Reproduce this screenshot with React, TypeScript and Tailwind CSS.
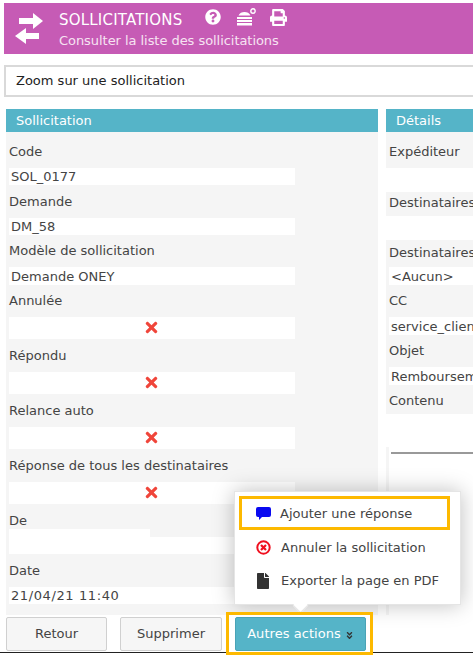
import React from "react";
import { FaQuestionCircle, FaPrint, FaTimes, FaFile, FaAngleDoubleDown } from "react-icons/fa";

const font = { fontFamily: '"DejaVu Sans", sans-serif' };

function Label({ children, cls }: { children?: React.ReactNode; cls: string }) {
  return <div className={`${cls} text-[13px] leading-[17px] text-[#444] whitespace-nowrap`}>{children}</div>;
}

function Box({ children, cls }: { children?: React.ReactNode; cls: string }) {
  return (
    <div className={`${cls} bg-white pl-[2px] text-[13px] leading-[17px] text-[#444] flex items-center whitespace-nowrap overflow-hidden`}>
      {children}
    </div>
  );
}

function RedX() {
  return (
    <div className="w-full flex justify-center pr-[4px] pb-[2px]">
      <FaTimes className="text-[#f0453a] text-[17px]" />
    </div>
  );
}

function SectionHead({ title }: { title: string }) {
  return <div className="h-[23px] shrink-0 bg-[#55b4c8] pl-[10px] text-[13px] leading-[23px] text-white">{title}</div>;
}

const L33 = "h-[33px] pt-[8px]";
const L32 = "h-[32px] pt-[7px]";

export default function App() {
  return (
    <div className="w-[473px] h-[655px] overflow-hidden bg-white flex flex-col" style={font}>
      {/* Title banner */}
      <div className="mt-[3px] ml-[4px] h-[51px] shrink-0 bg-[#c65bb5] flex text-white">
        <svg width="28" height="31" viewBox="0 0 28 31" className="ml-[11px] mt-[10px] shrink-0" fill="white">
          <path d="M4 5h14V0l10 8-10 8v-5H4z" />
          <path d="M24 20H11v-5L0 23l11 8v-5h13z" />
        </svg>
        <div className="ml-[16px] pt-[8px]">
          <div className="flex items-center h-[18px]">
            <span className="text-[15px] leading-[18px] tracking-[0.2px] w-[146px] whitespace-nowrap">SOLLICITATIONS</span>
            <FaQuestionCircle className="text-[16px] -mt-[6px]" />
            <svg width="19" height="18" viewBox="0 0 19 18" className="ml-[16px] -mt-[6px]" fill="white">
              <path d="M1.500 7.500C2.500 5 5 4 7.500 4S12.500 5 13.500 7.500zM0 9h15v2H0zM0 12h15v2H0zM0 15h15v2.500H0z" />
              <circle cx="16" cy="3" r="2.200" fill="none" stroke="white" strokeWidth="1.400" />
            </svg>
            <FaPrint className="text-[17px] ml-[14px] -mt-[6px]" />
          </div>
          <div className="text-[13px] leading-[18px] mt-[3px] text-[#f6e3f2] tracking-[-0.05px] whitespace-nowrap">Consulter la liste des sollicitations</div>
        </div>
      </div>

      {/* Zoom title */}
      <div className="mt-[11px] ml-[4px] h-[32px] shrink-0 border-2 border-r-0 border-[#d9d9d9] pl-[10px] text-[13px] leading-[28px] text-[#222]">
        Zoom sur une sollicitation
      </div>

      {/* Two panels */}
      <div className="mt-[12px] flex pl-[6px] h-[506px] shrink-0 gap-[8px] overflow-hidden">
        <div className="w-[372px] shrink-0 flex flex-col bg-[#f5f5f5] overflow-hidden">
          <SectionHead title="Sollicitation" />
          <div className="w-[286px] ml-[3px] pt-[3px] flex flex-col">
            <Label cls={L33}>Code</Label>
            <Box cls="h-[17px] shrink-0">SOL_0177</Box>
            <Label cls={L33}>Demande</Label>
            <Box cls="h-[17px] shrink-0">DM_58</Box>
            <Label cls={L32}>Modèle de sollicitation</Label>
            <Box cls="h-[18px] shrink-0">Demande ONEY</Box>
            <Label cls={L32}>Annulée</Label>
            <Box cls="h-[22px] shrink-0"><RedX /></Box>
            <Label cls={L33}>Répondu</Label>
            <Box cls="h-[22px] shrink-0"><RedX /></Box>
            <Label cls={L33}>Relance auto</Label>
            <Box cls="h-[22px] shrink-0"><RedX /></Box>
            <Label cls={L33}>Réponse de tous les destinataires</Label>
            <Box cls="h-[22px] shrink-0"><RedX /></Box>
            <Label cls="h-[25px] pt-[8px]">De</Label>
            <div className="h-[8px] w-[141px] bg-white shrink-0" />
            <Box cls="h-[17px] shrink-0" />
            <Label cls={L33}>Date</Label>
            <Box cls="h-[17px] shrink-0 tracking-[0.6px]">21/04/21 11:40</Box>
            <Label cls={L33}>Date de première réponse</Label>
          </div>
        </div>

        <div className="flex-1 min-w-0 flex flex-col bg-[#f5f5f5] overflow-hidden">
          <SectionHead title="Détails" />
          <div className="pt-[3px] flex flex-col flex-1 min-h-0">
            <Label cls="h-[33px] pt-[8px] pl-[3px]">Expéditeur</Label>
            <Box cls="h-[24px] shrink-0" />
            <Label cls="h-[24px] pt-[2px] pl-[3px]">Destinataires</Label>
            <Box cls="h-[24px] shrink-0" />
            <Label cls="h-[27px] pt-[4px] pl-[3px]">Destinataires</Label>
            <Box cls="h-[18px] shrink-0 ml-[3px]">&lt;Aucun&gt;</Box>
            <Label cls="h-[32px] pt-[7px] pl-[3px]">CC</Label>
            <Box cls="h-[18px] shrink-0 ml-[3px]">service_client</Box>
            <Label cls="h-[32px] pt-[7px] pl-[3px]">Objet</Label>
            <Box cls="h-[18px] shrink-0 ml-[3px]">Remboursement</Box>
            <Label cls="h-[29px] pt-[7px] pl-[3px]">Contenu</Label>
            <div className="h-[33px] shrink-0 bg-white" />
            <div className="flex-1 ml-[3px] bg-white pt-[5px] pl-[2px]">
              <div className="border-t-2 border-[#999]" />
            </div>
          </div>
        </div>
      </div>

      {/* Action bar */}
      <div className="relative flex items-start pt-[2px] pl-[6px] h-[37px] shrink-0 bg-white">
        <button className="w-[101px] h-[34px] bg-[#f6f6f6] border border-[#d0d0d0] rounded-[2px] text-[13px] text-[#444]">Retour</button>
        <button className="ml-[13px] w-[102px] h-[34px] bg-[#f6f6f6] border border-[#d0d0d0] rounded-[2px] text-[13px] text-[#444]">Supprimer</button>
        <div className="relative z-10 ml-[4px] -mt-[5px] w-[147px] h-[43px] shrink-0 border-[3px] border-[#fdb900] pt-[2px] pr-[4px] pb-[1px] pl-[6px] bg-white">
          <button className="w-full h-full bg-[#55b4c8] rounded-[2px] border border-[#4aa3b6] text-[13px] text-white flex items-center justify-center gap-[4px] tracking-[0.05px]">
            Autres actions
            <FaAngleDoubleDown className="text-[9px] text-[#333] mt-[3px]" />
          </button>
        </div>

        {/* Popup menu */}
        <div className="absolute left-[234px] -top-[124px] w-[227px] h-[114px] bg-white border border-[#e5e5e5] shadow-[0_0_20px_rgba(0,0,0,0.25)] text-[13px] text-[#444]">
          <div className="absolute left-[4px] top-[4px] w-[211px] h-[34px] border-[3px] border-[#fdb900] flex items-center pl-[14px]">
            <svg width="15" height="13" viewBox="0 0 15 13" fill="#0a0af0" className="shrink-0">
              <path d="M2 0h11a2 2 0 0 1 2 2v6a2 2 0 0 1-2 2H6l-3 3v-3H2a2 2 0 0 1-2-2V2a2 2 0 0 1 2-2z" />
            </svg>
            <span className="ml-[9px] mt-[2px] whitespace-nowrap">Ajouter une réponse</span>
          </div>
          <div className="absolute left-[21px] top-[46px] flex items-center whitespace-nowrap">
            <svg width="15" height="15" viewBox="0 0 15 15" className="shrink-0">
              <circle cx="7.500" cy="7.500" r="6.200" fill="none" stroke="#f00f1e" strokeWidth="2" />
              <path d="M5 5l5 5M10 5l-5 5" stroke="#f00f1e" strokeWidth="2.200" />
            </svg>
            <span className="ml-[10px]">Annuler la sollicitation</span>
          </div>
          <div className="absolute left-[20px] top-[79px] flex items-center whitespace-nowrap">
            <FaFile className="text-[16px] text-[#333] shrink-0" />
            <span className="ml-[10px]">Exporter la page en PDF</span>
          </div>
          <div className="absolute left-[60px] top-[108px] w-[11px] h-[11px] bg-white rotate-45 border-r border-b border-[#e5e5e5]" />
        </div>
      </div>

      {/* Bottom edge line */}
      <div className="h-[1px] shrink-0 bg-[#222]" />
    </div>
  );
}
